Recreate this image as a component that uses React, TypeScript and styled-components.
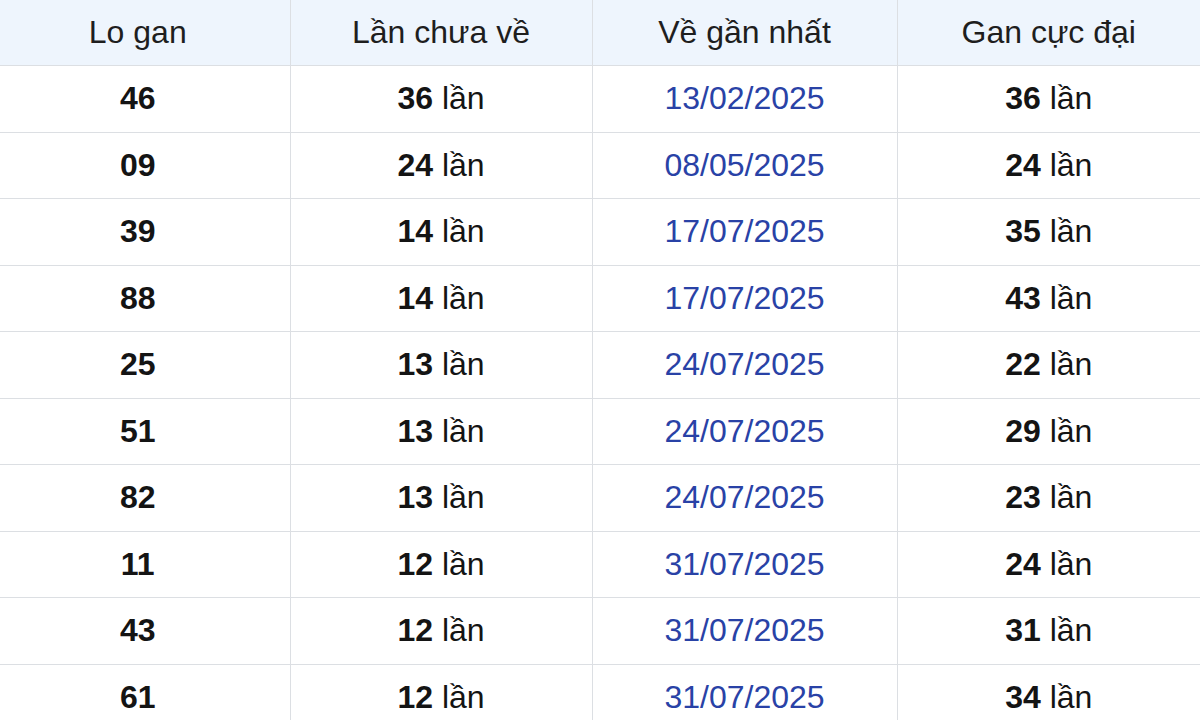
import styled, { createGlobalStyle } from "styled-components";

const GlobalStyle = createGlobalStyle`
  html, body {
    margin: 0;
    padding: 0;
    background: #ffffff;
  }
  body {
    font-family: "Liberation Sans", Arial, sans-serif;
    overflow: hidden;
  }
`;

const Table = styled.table`
  width: 1200px;
  border-collapse: collapse;
  table-layout: fixed;
  font-family: "Liberation Sans", Arial, sans-serif;
  font-size: 32px;
  color: #141414;
`;

const HeadCell = styled.th<{ $first?: boolean }>`
  height: 65px;
  padding: 0 ${(p) => (p.$first ? "14px" : "0")} 0 0;
  background: #eef5fd;
  color: #1e1e1e;
  font-weight: 400;
  text-align: center;
  border-right: 1px solid #dcdfe3;
  border-bottom: 1px solid #dcdfe3;
  &:last-child {
    border-right: none;
  }
`;

const Cell = styled.td<{ $first?: boolean }>`
  height: 65.5px;
  padding: 0 ${(p) => (p.$first ? "14px" : "0")} 0 0;
  text-align: center;
  border-right: 1px solid #dcdfe3;
  border-bottom: 1px solid #dcdfe3;
  &:last-child {
    border-right: none;
  }
`;

const Num = styled.b`
  font-weight: 700;
`;

const DateText = styled.span`
  color: #2942a6;
`;

const rows = [
  { lo: "46", miss: 36, date: "13/02/2025", max: 36 },
  { lo: "09", miss: 24, date: "08/05/2025", max: 24 },
  { lo: "39", miss: 14, date: "17/07/2025", max: 35 },
  { lo: "88", miss: 14, date: "17/07/2025", max: 43 },
  { lo: "25", miss: 13, date: "24/07/2025", max: 22 },
  { lo: "51", miss: 13, date: "24/07/2025", max: 29 },
  { lo: "82", miss: 13, date: "24/07/2025", max: 23 },
  { lo: "11", miss: 12, date: "31/07/2025", max: 24 },
  { lo: "43", miss: 12, date: "31/07/2025", max: 31 },
  { lo: "61", miss: 12, date: "31/07/2025", max: 34 },
];

export default function App() {
  return (
    <>
      <GlobalStyle />
      <Table>
        <colgroup>
          <col style={{ width: 290 }} />
          <col style={{ width: 302 }} />
          <col style={{ width: 305 }} />
          <col style={{ width: 303 }} />
        </colgroup>
        <thead>
          <tr>
            <HeadCell $first>Lo gan</HeadCell>
            <HeadCell>Lần chưa về</HeadCell>
            <HeadCell>Về gần nhất</HeadCell>
            <HeadCell>Gan cực đại</HeadCell>
          </tr>
        </thead>
        <tbody>
          {rows.map((r) => (
            <tr key={r.lo}>
              <Cell $first>
                <Num>{r.lo}</Num>
              </Cell>
              <Cell>
                <Num>{r.miss}</Num> lần
              </Cell>
              <Cell>
                <DateText>{r.date}</DateText>
              </Cell>
              <Cell>
                <Num>{r.max}</Num> lần
              </Cell>
            </tr>
          ))}
        </tbody>
      </Table>
    </>
  );
}
